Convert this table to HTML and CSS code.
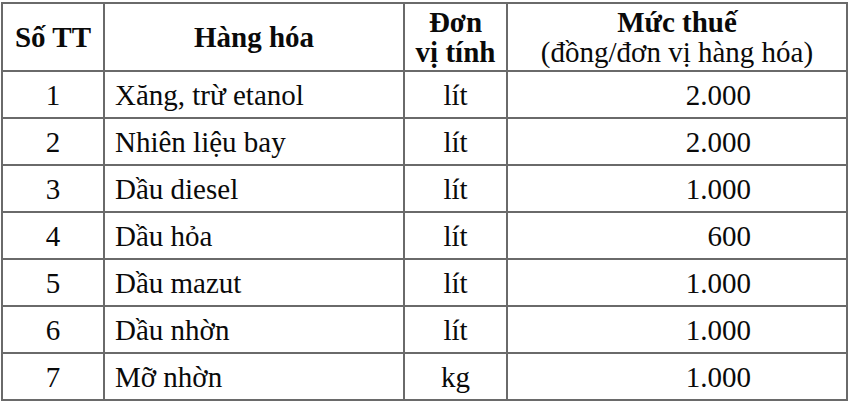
FILE: index.html
```html
<!DOCTYPE html>
<html lang="vi">
<head>
<meta charset="utf-8">
<link rel="stylesheet" href="styles.css">
</head>
<body>
<table class="tax">
<colgroup>
<col class="c1"><col class="c2"><col class="c3"><col class="c4">
</colgroup>
<thead>
<tr>
<th>Số TT</th>
<th>Hàng hóa</th>
<th>Đơn<br>vị tính</th>
<th>Mức thuế<br><span class="sub">(đồng/đơn vị hàng hóa)</span></th>
</tr>
</thead>
<tbody>
<tr><td class="num">1</td><td class="name">Xăng, trừ etanol</td><td class="unit">lít</td><td class="val">2.000</td></tr>
<tr><td class="num">2</td><td class="name">Nhiên liệu bay</td><td class="unit">lít</td><td class="val">2.000</td></tr>
<tr><td class="num">3</td><td class="name">Dầu diesel</td><td class="unit">lít</td><td class="val">1.000</td></tr>
<tr><td class="num">4</td><td class="name">Dầu hỏa</td><td class="unit">lít</td><td class="val">600</td></tr>
<tr><td class="num">5</td><td class="name">Dầu mazut</td><td class="unit">lít</td><td class="val">1.000</td></tr>
<tr><td class="num">6</td><td class="name">Dầu nhờn</td><td class="unit">lít</td><td class="val">1.000</td></tr>
<tr><td class="num">7</td><td class="name">Mỡ nhờn</td><td class="unit">kg</td><td class="val">1.000</td></tr>
</tbody>
</table>
</body>
</html>
```
FILE: styles.css
```css
html, body {
  margin: 0;
  padding: 0;
  background: #ffffff;
}
body {
  padding: 2px 0 0 1px;
  font-family: "Liberation Serif", serif;
  color: #0a0a0a;
}
.tax {
  border-collapse: collapse;
  table-layout: fixed;
  width: 845px;
  font-family: "Liberation Serif", serif;
  font-size: 29px;
}
.c1 { width: 102px; }
.c2 { width: 300px; }
.c3 { width: 103px; }
.c4 { width: 340px; }
.tax th, .tax td {
  font-family: "Liberation Serif", serif;
  border: 2px solid #6a6a6a;
  padding: 0;
  vertical-align: middle;
}
.tax th {
  height: 66px;
  font-weight: bold;
  text-align: center;
  line-height: 30px;
}
.tax th .sub {
  font-weight: normal;
}
.tax td {
  height: 45px;
  line-height: 30px;
}
.num, .unit { text-align: center; }
.tax .name { text-align: left; padding-left: 10px; }
.tax .val { text-align: right; padding-right: 95px; }
```
